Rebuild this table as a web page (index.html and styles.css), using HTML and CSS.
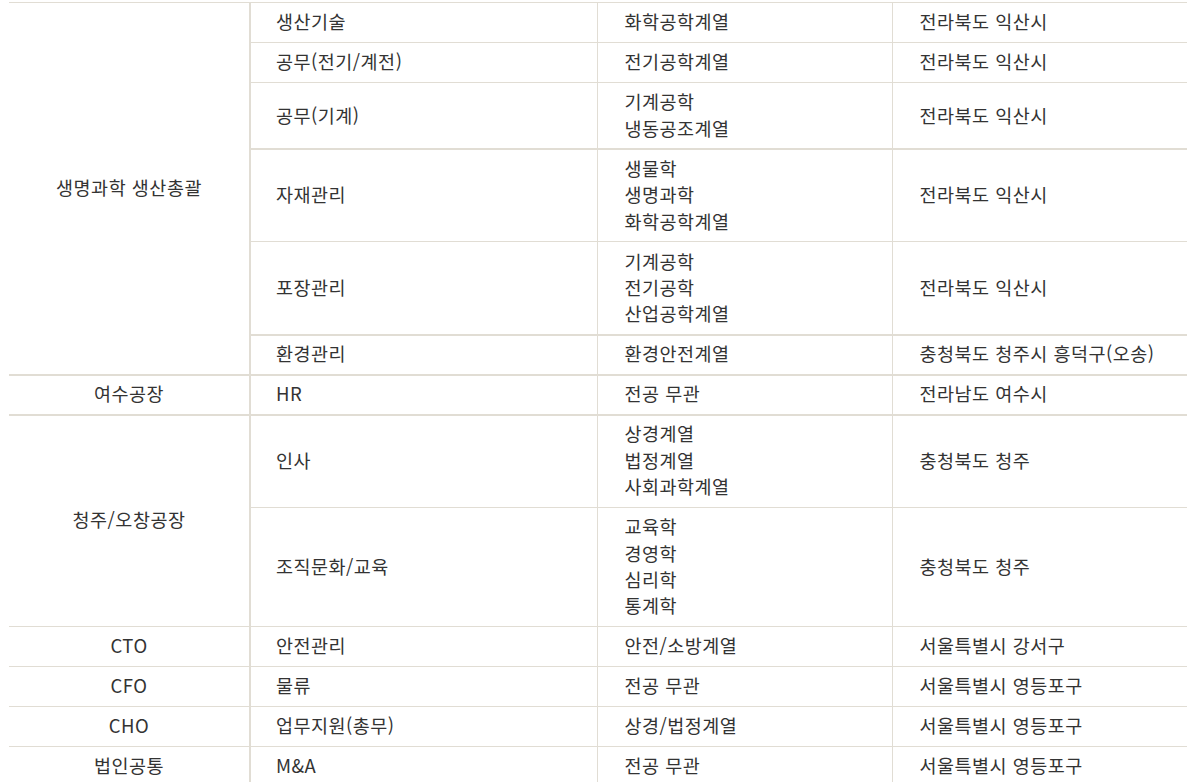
FILE: index.html
```html
<!DOCTYPE html>
<html lang="ko">
<head>
<meta charset="utf-8">
<title>채용 분야</title>
<link rel="stylesheet" href="styles.css">
</head>
<body>
<table class="recruit">
  <colgroup>
    <col class="c1"><col class="c2"><col class="c3"><col class="c4">
  </colgroup>
  <tbody>
    <tr>
      <td class="group" rowspan="6">생명과학 생산총괄</td>
      <td class="job">생산기술</td><td>화학공학계열</td><td>전라북도 익산시</td>
    </tr>
    <tr><td class="job">공무(전기/계전)</td><td>전기공학계열</td><td>전라북도 익산시</td></tr>
    <tr><td class="job">공무(기계)</td><td>기계공학<br>냉동공조계열</td><td>전라북도 익산시</td></tr>
    <tr class="thick"><td class="job">자재관리</td><td>생물학<br>생명과학<br>화학공학계열</td><td>전라북도 익산시</td></tr>
    <tr><td class="job">포장관리</td><td>기계공학<br>전기공학<br>산업공학계열</td><td>전라북도 익산시</td></tr>
    <tr class="thick"><td class="job">환경관리</td><td>환경안전계열</td><td>충청북도 청주시 흥덕구(오송)</td></tr>
    <tr class="thick">
      <td class="group">여수공장</td>
      <td class="job">HR</td><td>전공 무관</td><td>전라남도 여수시</td>
    </tr>
    <tr class="thick">
      <td class="group" rowspan="2">청주/오창공장</td>
      <td class="job">인사</td><td>상경계열<br>법정계열<br>사회과학계열</td><td>충청북도 청주</td>
    </tr>
    <tr><td class="job">조직문화/교육</td><td>교육학<br>경영학<br>심리학<br>통계학</td><td>충청북도 청주</td></tr>
    <tr><td class="group">CTO</td><td class="job">안전관리</td><td>안전/소방계열</td><td>서울특별시 강서구</td></tr>
    <tr><td class="group">CFO</td><td class="job">물류</td><td>전공 무관</td><td>서울특별시 영등포구</td></tr>
    <tr><td class="group">CHO</td><td class="job">업무지원(총무)</td><td>상경/법정계열</td><td>서울특별시 영등포구</td></tr>
    <tr><td class="group">법인공통</td><td class="job">M&amp;A</td><td>전공 무관</td><td>서울특별시 영등포구</td></tr>
  </tbody>
</table>
</body>
</html>
```

FILE: styles.css
```css
html, body {
  margin: 0;
  padding: 0;
  background: #ffffff;
}

body {
  padding: 2px 0 0 9px;
  font-family: "Noto Sans CJK KR", "Noto Sans", sans-serif;
  color: #333333;
}

.recruit {
  width: 1178px;
  table-layout: fixed;
  border-collapse: collapse;
  font-size: 18.5px;
  letter-spacing: 0.5px;
  line-height: 26.4px;
}

.c1 { width: 241px; }
.c2 { width: 347px; }
.c3 { width: 295px; }
.c4 { width: 295px; }

.recruit td {
  border-top: 1px solid #e1ddd4;
  border-left: 1px solid #e1ddd4;
  padding: 5.3px 10px 7.3px 27px;
  vertical-align: middle;
  text-align: left;
  white-space: nowrap;
}

.recruit td:first-child {
  border-left: none;
}

.recruit td.job {
  padding-left: 25px;
}

.recruit td.group {
  text-align: center;
  padding-left: 10px;
  border-right: 2px solid #e1ddd4;
}

.recruit tr.thick td {
  border-top-width: 2px;
  padding-top: 4.3px;
}
```
